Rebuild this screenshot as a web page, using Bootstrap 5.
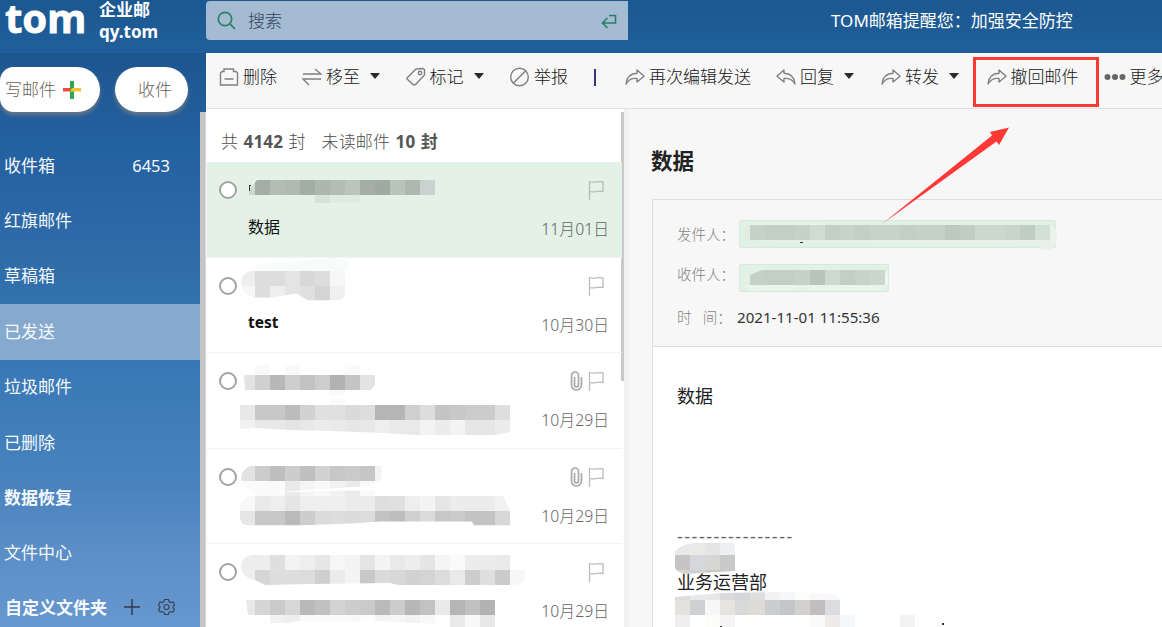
<!DOCTYPE html>
<html lang="zh-CN">
<head>
<meta charset="utf-8">
<title>TOM 企业邮</title>
<link rel="stylesheet" href="https://cdn.jsdelivr.net/npm/bootstrap@5.3.0/dist/css/bootstrap.min.css">
<style>
body{width:1162px;height:627px;overflow:hidden;font-family:"Noto Sans","Noto Sans CJK SC",sans-serif;font-size:17px;line-height:24px;font-weight:300;color:#333;background:#f7f7f7}
.topbar{height:53px;background:linear-gradient(#1c5890,#205f9b);font-weight:400}
.brand-zone{width:206px}
.wordmark{font:700 40px/44px "Noto Sans","Open Sans",sans-serif;margin:-4px 0 0 5px;width:94px;-webkit-text-stroke:.8px #fff}
.brand-sub{font-size:17px;line-height:21.5px;font-weight:700;margin-top:-1px}
.searchbox{width:422px;height:39px;margin-top:1px;background:#a5bbd1;border-radius:4px 0 0 4px;color:#2f4560;padding:0 10px 0 11px;font-weight:300}
.notice{margin-left:203px;margin-top:9px}
.workarea{height:574px}
.sidebar{width:206px;background:linear-gradient(#1c568f 0,#2360a0 15%,#2e6aa8 33%,#3978b6 55%,#4883be 75%,#5b8dc6 86%,#6797cf 100%)}
.pill{height:45px;background:#fff;border-radius:23px;color:#666259;box-shadow:0 3px 4px rgba(130,130,130,.75);margin-top:14px}
.pill-write{width:100px;border-radius:14px 23px 23px 14px;padding-left:5px}
.pill-recv{width:73px;margin-left:15px;padding-left:23px}
.sidetrack{width:6px;background:#c5c5c5;height:515px;border-right:1px solid #d9d9d9}
.folders{width:200px;font-weight:400}
.folder{height:55.4px;padding:0 30px 0 4px;color:#f6f9fc;white-space:nowrap}
.folder.chosen{background:#86a9ce}
.folder svg{flex:none}
.main-zone{width:956px}
.tools{height:56px;border-bottom:1px solid #dfe0e4;background:#f7f7f7;display:grid;grid-template-columns:83px 103.5px 104.5px 81px 34px 151px 105px 105.500px 117px 80px;padding-left:13px;color:#151515;white-space:nowrap;padding-bottom:7px}
.tool-item{display:flex;align-items:center}
.tool-item svg{width:20px;height:20px;margin-right:4px;flex:none;fill:none;stroke:#808080;stroke-width:1.4}
.tri{border:5.5px solid transparent;border-top:6px solid #2a2a2a;border-bottom:0;margin-left:10px;margin-top:-3px}
.recall{position:relative}
.recall::after{content:"";position:absolute;left:-14px;top:4px;width:126px;height:50px;border:3px solid #ff3936}
.divider-bar{width:1.500px;height:17px;background:#34347a;margin-left:3px}
.maillist{width:415px;background:#fff;margin-left:1px}
.summary{height:53px;padding:21px 0 0 14px;color:#4c4c4c;letter-spacing:.22px;word-spacing:.6px}
.summary b{font-weight:700;color:#555}
.mailrow{height:95.5px;position:relative;border-bottom:1px solid #f3f3f3;font-size:16px}
.mailrow.opened{background:#e3f1e6}
.round{position:absolute;left:12px;top:19px;width:18px;height:18px;border:2px solid #a3a3a3;border-radius:50%;background:#fff}
.subject{position:absolute;left:41px;top:53px;color:#111;font-weight:400}
.date{position:absolute;right:13px;top:55px;color:#646464;font-size:15.8px}
.marks{position:absolute;right:17px;top:18px;display:flex}
.smear{position:absolute;left:0;top:0;pointer-events:none}
.listtrack{width:3px;height:269px;background:#c9c9c9}
.reader{width:538px;background:#f7f7f7;border-left:5px solid #f1f1f1}
.reader h1{font-size:21.5px;line-height:30px;font-weight:700;color:#222;margin:37px 0 23px 22px}
.letter{margin-left:23px;border:1px solid #dcdee2;border-right:0;height:440px}
.meta{height:147px;border-bottom:1px solid #dcdee2;padding:20px 0 0 24px;font-size:14.5px;color:#858585;position:relative}
.chip{height:28px;background:#e2f1e5;border:1px solid #d5eadb;border-radius:2px}
.sent-time{font-size:15.1px;color:#333;font-weight:400}
.content-zone{background:#fff;height:300px;padding:36px 0 0 24px;font-size:18px;line-height:26px;color:#222;position:relative;font-weight:400}
.sign-rule{letter-spacing:1.500px;color:#666}
.arrow{position:absolute;left:880px;top:125px;z-index:5}
</style>
</head>
<body>
<header class="topbar d-flex text-white">
 <div class="brand-zone d-flex"><div class="wordmark">tom</div><div class="brand-sub">企业邮<br>qy.tom</div></div>
 <div class="searchbox d-flex align-items-center">
  <svg width="20" height="20" fill="none" stroke="#27806a" stroke-width="1.7"><circle cx="8" cy="8" r="6.7"/><path d="M13 13l5 5"/></svg>
  <span style="margin-left:11px">搜索</span>
  <svg class="ms-auto" width="18" height="18" fill="none" stroke="#27806a" stroke-width="1.6"><path d="M9 3.500h6.500V11H3M7.500 6L2.500 11l5 5"/></svg>
 </div>
 <div class="notice">TOM邮箱提醒您：加强安全防控</div>
</header>
<div class="workarea d-flex">
 <aside class="sidebar">
  <div class="d-flex" style="height:59px">
   <div class="pill pill-write d-flex align-items-center">写邮件<svg width="18" height="18" style="margin-left:7px"><path fill="#f04a3e" d="M0 7h7v3.500H0z"/><path fill="#2fa84f" d="M7 0h4v18H7z"/><path fill="#f6bf35" d="M9 7h9v3.500H7z"/></svg></div>
   <div class="pill pill-recv d-flex align-items-center">收件</div>
  </div>
  <div class="d-flex">
   <nav class="folders" style="padding-top:26px">
    <div class="folder d-flex align-items-center justify-content-between"><span>收件箱</span><span style="font-size:16.5px">6453</span></div>
    <div class="folder d-flex align-items-center">红旗邮件</div>
    <div class="folder d-flex align-items-center">草稿箱</div>
    <div class="folder chosen d-flex align-items-center">已发送</div>
    <div class="folder d-flex align-items-center">垃圾邮件</div>
    <div class="folder d-flex align-items-center">已删除</div>
    <div class="folder d-flex align-items-center fw-bold">数据恢复</div>
    <div class="folder d-flex align-items-center">文件中心</div>
    <div class="folder d-flex align-items-center fw-bold pe-0" style="padding-left:5px;height:54px">自定义文件夹
     <svg width="16" height="18" style="margin-left:17px" stroke="#333d48" stroke-width="1.500"><path d="M0 8h16M8 0v16"/></svg>
     <svg width="17" height="18" viewBox="0 0 18 18" style="margin-left:18px;margin-top:-2px" fill="none" stroke="#38434f" stroke-width="1.2"><path d="M7 1h4l.7 2.200 2 1.100 2.200-.6 1.600 3L16 8.500v1.200l1.500 1.700-1.700 3-2.200-.6-2 1.100L11 17H7l-.6-2.100-2-1.100-2.200.6-1.700-3L2 9.700V8.500L.5 6.700l1.600-3 2.300.6 2-1.100z"/><circle cx="9" cy="9" r="2.700"/></svg>
    </div>
   </nav>
   <div class="sidetrack"></div>
  </div>
 </aside>
 <main class="main-zone">
  <svg class="d-none"><defs>
   <symbol id="fwd" viewBox="0 0 20 20"><path d="M12 3l7 6.200-7 5.800v-3.500C7 11 3.500 12.500 1 17c.5-6 4-10.500 11-10.700z" stroke-linejoin="round"/></symbol>
   <symbol id="flag" viewBox="0 0 17 20"><path d="M1.500 20V1.500c5 2 8-1 13.500 .5V11.500c-6-1.500-9 1.500-13.500 0" fill="none" stroke="#b9bdb9" stroke-width="1.300"/></symbol>
   <symbol id="clip" viewBox="0 0 13 20"><path d="M1.500 5v9a5 5 0 0 0 10 0V6M1.500 6V4.500a3.500 3.500 0 0 1 7 0V14a2 2 0 0 1-4 0V6" fill="none" stroke="#aaa" stroke-width="1.700"/></symbol>
  </defs></svg>
  <div class="tools">
   <div class="tool-item"><svg viewBox="0 0 20 20"><path d="M1.500 18V6l1.500-1.500h2V2h9.500v2.500h2.500L18.500 6v12zM5.500 12h9"/></svg>删除</div>
   <div class="tool-item"><svg viewBox="0 0 20 20"><path d="M1 7h18l-6-5M19 12H1l6 6"/></svg>移至<i class="tri"></i></div>
   <div class="tool-item"><svg viewBox="0 0 20 20"><path d="M1 11l9-9 7-.5 1.500 1V8l-9 9.500-2 .5L1 12z"/><circle cx="14" cy="6" r="1.700"/></svg>标记<i class="tri"></i></div>
   <div class="tool-item"><svg viewBox="0 0 20 20"><circle cx="9.500" cy="10" r="8.800"/><path d="M15.500 4l-12 12"/></svg>举报</div>
   <div class="tool-item"><i class="divider-bar"></i></div>
   <div class="tool-item"><svg><use href="#fwd"/></svg>再次编辑发送</div>
   <div class="tool-item"><svg style="transform:scaleX(-1)"><use href="#fwd"/></svg>回复<i class="tri"></i></div>
   <div class="tool-item"><svg><use href="#fwd"/></svg>转发<i class="tri"></i></div>
   <div class="tool-item recall"><svg><use href="#fwd"/></svg>撤回邮件</div>
   <div class="tool-item"><svg style="width:22px" viewBox="0 0 22 20"><g fill="#666" stroke="none"><circle cx="3.500" cy="10" r="3"/><circle cx="11" cy="10" r="3"/><circle cx="18.500" cy="10" r="3"/></g></svg>更多</div>
  </div>
  <div class="d-flex">
   <section class="maillist">
    <div class="summary">共 <b>4142</b> 封 &nbsp; 未读邮件 <b>10 封</b></div>
    <div class="mailrow opened"><i class="round"></i><div class="marks"><svg width="17" height="20"><use href="#flag"/></svg></div><span class="subject">数据</span><span class="date">11月01日</span><svg class="smear" data-cells="sender1" width="415" height="96" viewBox="207 162 415 96"></svg></div>
    <div class="mailrow"><i class="round"></i><div class="marks"><svg width="17" height="20"><use href="#flag"/></svg></div><span class="subject fw-bold" style="font-size:15.5px;top:52px">test</span><span class="date">10月30日</span><svg class="smear" data-cells="sender2" width="415" height="96" viewBox="207 257.5 415 96"></svg></div>
    <div class="mailrow"><i class="round"></i><div class="marks"><svg width="13" height="20" style="margin-right:5px"><use href="#clip"/></svg><svg width="17" height="20"><use href="#flag"/></svg></div><span class="date">10月29日</span><svg class="smear" data-cells="sender3" width="415" height="96" viewBox="207 353 415 96"></svg></div>
    <div class="mailrow"><i class="round"></i><div class="marks"><svg width="13" height="20" style="margin-right:5px"><use href="#clip"/></svg><svg width="17" height="20"><use href="#flag"/></svg></div><span class="date">10月29日</span><svg class="smear" data-cells="sender4" width="415" height="96" viewBox="207 448.5 415 96"></svg></div>
    <div class="mailrow"><i class="round"></i><div class="marks"><svg width="17" height="20"><use href="#flag"/></svg></div><span class="date">10月29日</span><svg class="smear" data-cells="sender5" width="415" height="96" viewBox="207 544 415 96"></svg></div>
   </section>
   <div class="bg-white" style="width:3px;padding-top:3px;margin-left:-1px"><div class="listtrack"></div></div>
   <section class="reader">
    <h1>数据</h1>
    <div class="letter">
     <div class="meta">
      <div class="d-flex align-items-center" style="height:28px"><span style="width:62px">发件人：</span><div class="chip" style="width:317px"></div></div>
      <div class="d-flex" style="height:28px;margin-top:16px"><span style="width:62px;line-height:21px">收件人：</span><div class="chip" style="width:150px"></div></div>
      <div class="d-flex align-items-center" style="margin-top:13px;height:24px"><span style="width:60px">时 &nbsp; 间：</span><span class="sent-time">2021-11-01 11:55:36</span></div>
      <svg class="smear" data-cells="people" width="509" height="147" viewBox="653 200 509 147"></svg>
     </div>
     <div class="content-zone">数据<div style="height:114px"></div><div class="sign-rule">----------------</div><div style="margin-top:20px">业务运营部</div>
      <svg class="smear" data-cells="signature" width="509" height="280" viewBox="653 347 509 280"></svg>
     </div>
    </div>
   </section>
  </div>
 </main>
</div>
<svg class="arrow" width="130" height="102" viewBox="880 125 130 102"><path fill="#ff3936" d="M882 224L992 135.500 990 132 1009 127.500 999 145 996.500 141.500z"/></svg>
<script src="https://cdn.jsdelivr.net/npm/bootstrap@5.3.0/dist/js/bootstrap.bundle.min.js"></script>
<script>
// Each redaction: an outline, strips [x, y, height, "colour ..."] of 15px tiles, and specks left uncovered.
const redactions = {
 sender1: ["M249 190L257 180H435V195H360V203H315V195H249z", [[240,180,15,"cdd8d0 a4aea6 b3bdb5 b0bab0 a2ada6 adb7ae b3bdb5 bbc5bc a5ada6 9faaa4 b8c3ba aeb8ae c9d2cf"],[315,195,8,"d7e2da deebe2 deebe2"]],"M249 185h2v1h-1v5h-1z"],
 sender2: ["M254 270L258 264 338 257 350 263 345 270V293Q344 300 335 300H308L297 293 271 297H254Q242 294 241 281 242 271 254 270z", [[240,255,15,"f8fbfa f8fbfa f8fbfa f8fbfa f8fbfa f8fbfa f8fbfa f8fbfa"],[240,270,15,"eeeeee dddddd dddddd e4e4e4 d8d8d8 dddddd f6f6f6"],[240,285,15,"f7f7f7 dddddd eeeeee e4e4e4 e0e0e0 d4d4d4 f0f0f0"]]],
 sender3: ["M244 376L255 365H375V385L371 390H345V395H330V390H245zM240 405H330V399H345V405H510V432L495 435H415L385 433 330 431 290 430 255 428 240 429z", [[240,360,15,"ffffff f9f9f9 ffffff f8f8f8 ffffff ffffff ffffff fafafa ffffff"],[240,375,15,"e2e2e2 d0d0d0 b8b8b8 cecece c2c2c2 cecece b2b2b2 c5c5c5 e3e3e3"],[330,390,15,"fafafa"],[240,405,15,"e8e8e8 c8c8c8 c8c8c8 bcbcbc d2d2d2 e0e0e0 e0e0e0 dadada dddddd b5b5b5 b5b5b5 cfcfcf dddddd c4c4c4 c8c8c8 cccccc cccccc dfdfdf"],[240,420,15,"f1f1f1 e8e8e8 e8e8e8 e4e4e4 e8e8e8 ececec eaeaea e7e7e7 e8e8e8 eeeeee e9e9e9 e9e9e9 f3f3f3 ececec f3f3f3 e6e6e6 e6e6e6 ececec"]]],
 sender4: ["M252 465H382L381 478Q376 485 362 486L330 488 300 490 262 494Q242 490 241 478 242 467 252 465zM252 495L285 492 340 490H390V495H503L510 510V525H474L472 521H380L350 523 300 525H248Q240 524 240 516V505Q243 496 252 495z", [[240,465,15,"e2e2e2 cccccc bebebe cdcdcd c0c0c0 d2d2d2 c7c7c7 cacaca c6c6c6 f3f3f3"],[240,480,15,"fafafa fafafa fafafa eaeaea f5f5f5 f9f9f9 f2f2f2 ebebeb f9f9f9 ffffff ffffff ffffff ffffff ffffff ffffff ffffff ffffff"],[240,495,15,"f8f8f8 e9e9e9 eeeeee e5e5e5 eeeeee eeeeee efefef ebebeb ececec dedede e0e0e0 eeeeee f4f4f4 e6e6e6 ececec ececec ececec f1f1f1"],[240,510,15,"e6e6e6 c7c7c7 c7c7c7 bababa cdcdcd dbdbdb dddddd dbdbdb dcdcdc c3c3c3 bdbdbd cfcfcf dbdbdb c7c7c7 cacaca c3c3c3 c3c3c3 d7d7d7"]]],
 sender5: ["M252 555H510V570H525V580Q521 585 512 585H398L390 583 310 584 265 585 255 580Q241 577 241 566 242 556 252 555zM246 600H495V630H455L440 624 380 621H300L285 623H255V615H248z", [[240,555,15,"ededed ededed dfdfdf f3f3f3 eeeeee e6e6e6 f6f6f6 f3f3f3 e4e4e4 f4f4f4 e9e9e9 ededed e5e5e5 f5f5f5 fafafa ececec ececec eaeaea"],[240,570,15,"eeeeee d6d6d6 dddddd dddddd dcdcdc cfcfcf ebebeb f4f4f4 c8c8c8 dadada d8d8d8 d2d2d2 d4d4d4 dcdcdc e9e9e9 cdcdcd dfdfdf cbcbcb f7f7f7"],[240,600,15,"e8e8e8 d5d5d5 cacaca d7d7d7 b9b9b9 c1c1c1 d3d3d3 cdcdcd cacaca bababa cccccc b7b7b7 c2c2c2 e9e9e9 b5b5b5 c1c1c1 b3b3b3"],[240,615,15,"ffffff ffffff f2f2f2 eeeeee fafafa fafafa fafafa f8f8f8 fcfcfc f4f4f4 f6f6f6 f2f2f2 f8f8f8 fefefe e9e9e9 f8f8f8 e8e8e8"]]],
 people: ["M750 223H830L900 224.500H1050L1057 230V242L1052 250H1042L1037 245 860 242 760 241 744 240 743 230zM750 275L762 270H885L888 276V283L882 290H765L752 292 744 287z", [[735,210,15,"e5f0e8 e9f3ec e9f3ec e9f3ec e9f3ec e9f3ec"],[750,225,15,"c6d1c8 c3cec5 c3cec5 c6d1c8 d0dbd2 c3cec5 c7d2c9 c3cec5 c7d2c9 c7d2c9 c3cec5 c5d0c7 c5d0c7 bdc8bf c1ccc3 ccd7ce ccd7ce c9d4cb c0cdc2 d2e0d6 ebf2ed"],[735,225,15,"e1eee4"],[735,240,15,"e5f1e8 e7f1ea e7f1ea e7f1ea e7f1ea e7f1ea e7f1ea e7f1ea e7f1ea e7f1ea e7f1ea e7f1ea e7f1ea e7f1ea e7f1ea e7f1ea e7f1ea e7f1ea e7f1ea e7f1ea e7f1ea e9f2ec"],[735,270,15,"e2eee4 c5d0c7 c3cec5 c3cec5 c6d1c8 b9c4bb cdd8cf c3cec5 c7d2c9 cbd6cd f0f5f1"],[735,285,15,"eaf3ec eaf3ec eaf3ec eaf3ec e8f2ea eaf3ec eaf3ec eaf3ec eaf3ec eaf3ec eaf3ec"]],"M800 242h3v1h-3z"],
 signature: ["M675 551Q682 544 695 543H733L735 546V571L700 573 688 574Q677 573 675 568zM675 597L720 593 775 592 836 594 840 600V615H915V630H675z", [[675,540,15,"e9e9e9 e9e9e7 e5e5e5 eeeff2"],[675,555,15,"c6c4c5 d6d7da d6d6d4 c9c9c9"],[675,570,15,"d2d2d2 d0d0d0 c8c8c8 c8c8c8"],[675,585,15,"dddcdc e9e9eb eae8e6 dad9dd d5d6da dfdfdf f2f2f2 f7f7f7 fcfcfc f9f9f9 f8f8f8"],[675,600,15,"e3e2de cfd0d2 f7f7f7 e5e4df d9d9d9 dedad4 cccdcf c5c6ca d3d1ce c1bec0 dadcdf"],[675,615,15,"eeeeee ffffff fcfdf9 f5f5f5 ffffff ffffff ffffff ffffff ffffff fafafa eeebe9 f6f7f9 ffffff ffffff ffffff f3f3f3"]],"M720 626h2v1h-2zM942 623h2v2h-2z"]
};
document.querySelectorAll('[data-cells]').forEach(svg => {
  const id = svg.dataset.cells, [outline, strips, specks = ''] = redactions[id];
  svg.innerHTML = `<clipPath id="${id}"><path d="${outline}"/></clipPath><g clip-path="url(#${id})" shape-rendering="crispEdges">` +
    strips.map(([x, y, h, row]) => row.split(' ').map((c, i) => `<rect x="${x + 15 * i}" y="${y}" width="15" height="${h}" fill="#${c}"/>`).join('')).join('') + `</g><path d="${specks}" fill="#333"/>`;
});
</script>
</body>
</html>
